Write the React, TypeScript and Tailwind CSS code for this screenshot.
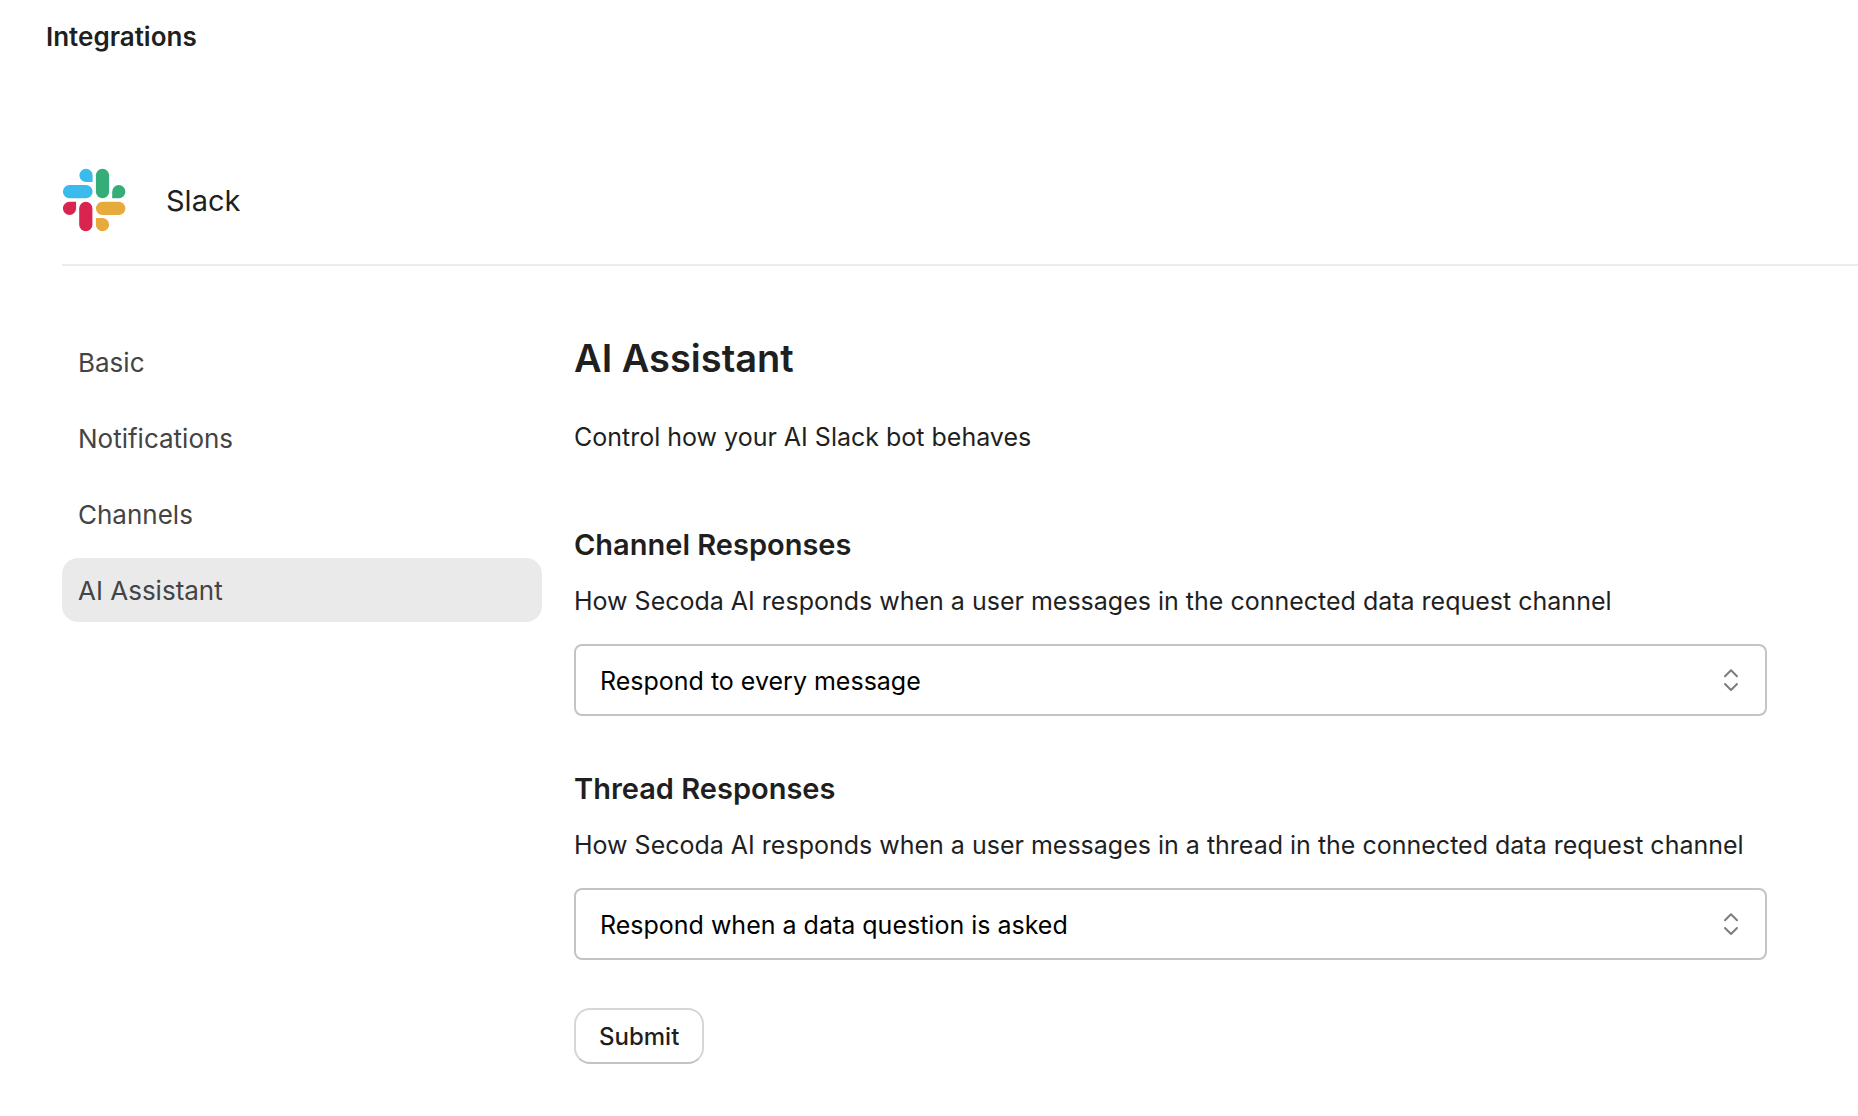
import { useId, useState } from 'react';

const navItems = ['Basic', 'Notifications', 'Channels', 'AI Assistant'];

const options = [
  'Respond to every message',
  'Respond when a data question is asked',
  'Never respond',
];

function SlackLogo() {
  return (
    <svg className="size-16" viewBox="0 0 64 64" aria-hidden="true">
      <g fill="#3abbec">
        <path d="M24 0.7a6.6 6.6 0 1 0 0 13.2h6.6V7.3A6.6 6.6 0 0 0 24 0.7Z" />
        <rect x="0.9" y="17.1" width="29.7" height="13.2" rx="6.6" />
      </g>
      <g fill="#34ad78">
        <rect x="33.9" y="0.7" width="13.2" height="29.6" rx="6.6" />
        <path d="M63.4 23.7a6.6 6.6 0 1 0-13.2 0v6.6h6.6a6.6 6.6 0 0 0 6.6-6.6Z" />
      </g>
      <g fill="#d92450">
        <path d="M0.9 40.3a6.6 6.6 0 1 0 13.2 0v-6.6H7.5a6.6 6.6 0 0 0-6.6 6.6Z" />
        <rect x="17.2" y="33.7" width="13.2" height="29.6" rx="6.6" />
      </g>
      <g fill="#e7aa3d">
        <rect x="33.9" y="33.7" width="29.5" height="13.2" rx="6.6" />
        <path d="M40.5 63.3a6.6 6.6 0 1 0 0-13.2h-6.6v6.6a6.6 6.6 0 0 0 6.6 6.6Z" />
      </g>
    </svg>
  );
}

function SelectorIcon() {
  return (
    <svg
      className="pointer-events-none absolute top-6 right-6 size-6"
      viewBox="0 0 24 24"
      fill="none"
      stroke="#7d7d7d"
      strokeWidth="2"
      strokeLinecap="round"
      strokeLinejoin="round"
      aria-hidden="true"
    >
      <path d="M6 8.3 12 2.3l6 6M6 16l6 6 6-6" />
    </svg>
  );
}

function ResponseField({
  title,
  description,
  initial,
}: {
  title: string;
  description: string;
  initial: string;
}) {
  const id = useId();
  const [value, setValue] = useState(initial);
  return (
    <section>
      <h2 className="text-[29px] leading-[42px] font-semibold">
        <label htmlFor={id}>{title}</label>
      </h2>
      <p id={`${id}-description`} className="mt-3.5 text-[25px] leading-[42px]">
        {description}
      </p>
      <div className="relative mt-[22px]">
        <select
          id={id}
          aria-describedby={`${id}-description`}
          value={value}
          onChange={(event) => setValue(event.target.value)}
          className="block h-18 w-full appearance-none rounded-lg border-2 border-[#c4c4c4] bg-white pt-1 pr-16 pl-6 text-[25px] text-black"
        >
          {options.map((option) => (
            <option key={option}>{option}</option>
          ))}
        </select>
        <SelectorIcon />
      </div>
    </section>
  );
}

export default function App() {
  const [active, setActive] = useState('AI Assistant');
  return (
    <div className="min-h-screen bg-white pt-4 pb-13 font-['Inter',sans-serif] text-[#1f1f1f]">
      <header className="px-[46px] text-[26px] leading-[42px] font-semibold">Integrations</header>

      <main className="mt-[110px] ml-[62px]">
        <div className="flex items-center gap-10 border-b-2 border-[#ececec] pb-8">
          <SlackLogo />
          <span className="pt-0.5 text-[29px] leading-[42px]">Slack</span>
        </div>

        <div className="mt-16 mr-[91px] flex items-start gap-8">
          <nav className="flex w-[480px] shrink-0 flex-col gap-3">
            {navItems.map((item) => (
              <button
                key={item}
                type="button"
                aria-current={item === active ? 'page' : undefined}
                onClick={() => setActive(item)}
                className={`h-16 rounded-2xl px-4 pt-0.5 text-left text-[26px] leading-[42px] text-[#444444] ${
                  item === active ? 'bg-[#eaeaea]' : 'bg-white'
                }`}
              >
                {item}
              </button>
            ))}
          </nav>

          <form
            className="min-w-0 flex-1 pt-1"
            onSubmit={(event) => event.preventDefault()}
          >
            <h1 className="text-[38px] leading-12 font-semibold">AI Assistant</h1>
            <p className="mt-[34px] text-[25px] leading-[42px]">
              Control how your AI Slack bot behaves
            </p>
            <div className="mt-[66px] flex flex-col gap-13">
              <ResponseField
                title="Channel Responses"
                description="How Secoda AI responds when a user messages in the connected data request channel"
                initial={options[0]}
              />
              <ResponseField
                title="Thread Responses"
                description="How Secoda AI responds when a user messages in a thread in the connected data request channel"
                initial={options[1]}
              />
            </div>
            <button
              type="submit"
              className="mt-12 h-14 rounded-2xl border-2 border-[#d6d6d6] border-b-[#c4c4c4] bg-white px-[23px] pt-0.5 text-2xl font-medium"
            >
              Submit
            </button>
          </form>
        </div>
      </main>
    </div>
  );
}
